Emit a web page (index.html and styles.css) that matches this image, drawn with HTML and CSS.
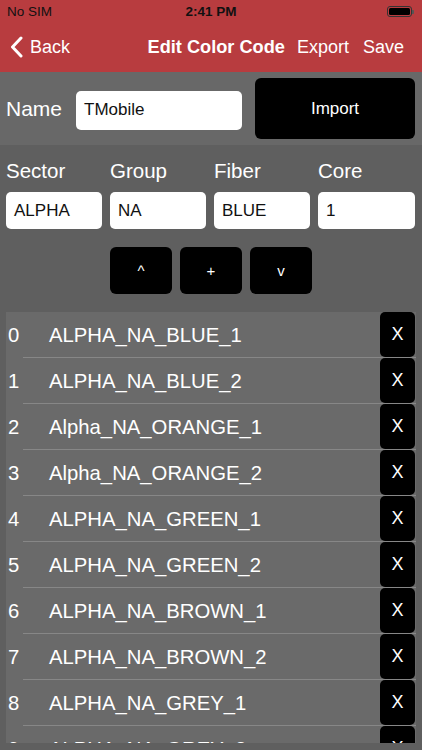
FILE: index.html
```html
<!DOCTYPE html>
<html>
<head>
<meta charset="utf-8">
<link rel="stylesheet" href="styles.css">
</head>
<body>
<div class="header">
  <div class="status">
    <span class="carrier">No SIM</span>
    <span class="time">2:41 PM</span>
    <span class="battery"><span class="battery-fill"></span><span class="battery-tip"></span></span>
  </div>
  <div class="nav">
    <div class="back">
      <svg class="chev" width="13" height="22" viewBox="0 0 13 22"><path d="M11 2 L2.5 11 L11 20" fill="none" stroke="#fff" stroke-width="3" stroke-linecap="round" stroke-linejoin="round"/></svg>
      <span>Back</span>
    </div>
    <div class="nav-title">Edit Color Code</div>
    <div class="nav-actions"><span>Export</span><span>Save</span></div>
  </div>
</div>

<div class="name-section">
  <span class="name-label">Name</span>
  <div class="input name-input">TMobile</div>
  <div class="btn import">Import</div>
</div>

<div class="fields">
  <div class="field"><div class="field-label">Sector</div><div class="input">ALPHA</div></div>
  <div class="field"><div class="field-label">Group</div><div class="input">NA</div></div>
  <div class="field"><div class="field-label">Fiber</div><div class="input">BLUE</div></div>
  <div class="field"><div class="field-label">Core</div><div class="input">1</div></div>
</div>

<div class="controls">
  <div class="btn ctrl">^</div>
  <div class="btn ctrl">+</div>
  <div class="btn ctrl">v</div>
</div>

<div class="list">
  <div class="row"><span class="idx">0</span><span class="code">ALPHA_NA_BLUE_1</span><span class="del">X</span></div>
  <div class="row"><span class="idx">1</span><span class="code">ALPHA_NA_BLUE_2</span><span class="del">X</span></div>
  <div class="row"><span class="idx">2</span><span class="code">Alpha_NA_ORANGE_1</span><span class="del">X</span></div>
  <div class="row"><span class="idx">3</span><span class="code">Alpha_NA_ORANGE_2</span><span class="del">X</span></div>
  <div class="row"><span class="idx">4</span><span class="code">ALPHA_NA_GREEN_1</span><span class="del">X</span></div>
  <div class="row"><span class="idx">5</span><span class="code">ALPHA_NA_GREEN_2</span><span class="del">X</span></div>
  <div class="row"><span class="idx">6</span><span class="code">ALPHA_NA_BROWN_1</span><span class="del">X</span></div>
  <div class="row"><span class="idx">7</span><span class="code">ALPHA_NA_BROWN_2</span><span class="del">X</span></div>
  <div class="row"><span class="idx">8</span><span class="code">ALPHA_NA_GREY_1</span><span class="del">X</span></div>
  <div class="row"><span class="idx">9</span><span class="code">ALPHA_NA_GREY_2</span><span class="del">X</span></div>
</div>
</body>
</html>
```

FILE: styles.css
```css
* { box-sizing: border-box; }
html, body { margin: 0; padding: 0; }
body {
  width: 422px;
  height: 750px;
  overflow: hidden;
  background: #5f5f5f;
  font-family: "Liberation Sans", Arial, sans-serif;
  color: #fff;
}
.header { background: #b83c3f; height: 72px; }
.status {
  height: 22px;
  display: flex;
  align-items: center;
  justify-content: space-between;
  padding: 0 10px 0 7px;
  font-size: 13.5px;
  color: #111;
  position: relative;
}
.time {
  position: absolute;
  left: 0; right: 0;
  text-align: center;
  font-weight: bold;
}
.carrier { color: #111; }
.battery {
  margin-left: auto;
  width: 25px;
  height: 11px;
  border: 1px solid #333;
  border-radius: 3px;
  padding: 1px;
  display: flex;
  position: relative;
}
.battery-fill { flex: 1; background: #000; border-radius: 1.5px; }
.battery-tip {
  position: absolute;
  right: -3px; top: 3px;
  width: 2px; height: 4px;
  background: #555;
  border-radius: 0 1px 1px 0;
}
.nav {
  height: 50px;
  display: flex;
  align-items: center;
  padding: 0 18px 0 10px;
  font-size: 18px;
}
.back { display: flex; align-items: center; gap: 7px; }
.chev { display: block; }
.nav-title {
  margin-left: auto;
  font-weight: bold;
  font-size: 18.2px;
}
.nav-actions { display: flex; gap: 14px; margin-left: 12px; }

.name-section {
  height: 73px;
  background: #686868;
  display: flex;
  align-items: center;
  padding: 0 7px 0 6px;
}
.name-label { font-size: 21px; width: 70px; }
.input {
  background: #fff;
  color: #111;
  border-radius: 5px;
  font-size: 17px;
  display: flex;
  align-items: center;
  padding-left: 8px;
}
.name-input { width: 166px; height: 39px; margin-top: 3px; }
.btn {
  background: #000;
  color: #fff;
  border-radius: 6px;
  display: flex;
  align-items: center;
  justify-content: center;
}
.import {
  width: 160px;
  height: 61px;
  margin-left: auto;
  font-size: 17px;
  align-self: flex-start;
  margin-top: 6px;
}
.fields {
  display: flex;
  gap: 8px;
  padding: 14px 7px 0 6px;
}
.field { width: 96px; }
.field:last-child { width: 97px; }
.field-label { font-size: 20.5px; height: 33px; line-height: 24px; }
.fields .input { height: 37px; }

.controls {
  display: flex;
  justify-content: center;
  gap: 8px;
  margin-top: 18px;
}
.ctrl { width: 62px; height: 47px; font-size: 15px; }

.list {
  margin: 18px 6px 0 6px;
  height: 431px;
  overflow: hidden;
  background: #6a6a6a;
}
.row {
  height: 46px;
  display: flex;
  align-items: center;
  position: relative;
  font-size: 20.3px;
}
.row::after {
  content: "";
  position: absolute;
  left: 17px; right: 0; bottom: 0;
  height: 1px;
  background: #878787;
}
.idx { width: 43px; padding-left: 2px; }
.code { flex: 1; }
.del {
  width: 35px;
  height: 45px;
  align-self: flex-start;
  background: #000;
  border-radius: 5px;
  display: flex;
  align-items: center;
  justify-content: center;
  font-size: 18px;
  margin-right: 1px;
  position: relative;
  z-index: 1;
}
```
